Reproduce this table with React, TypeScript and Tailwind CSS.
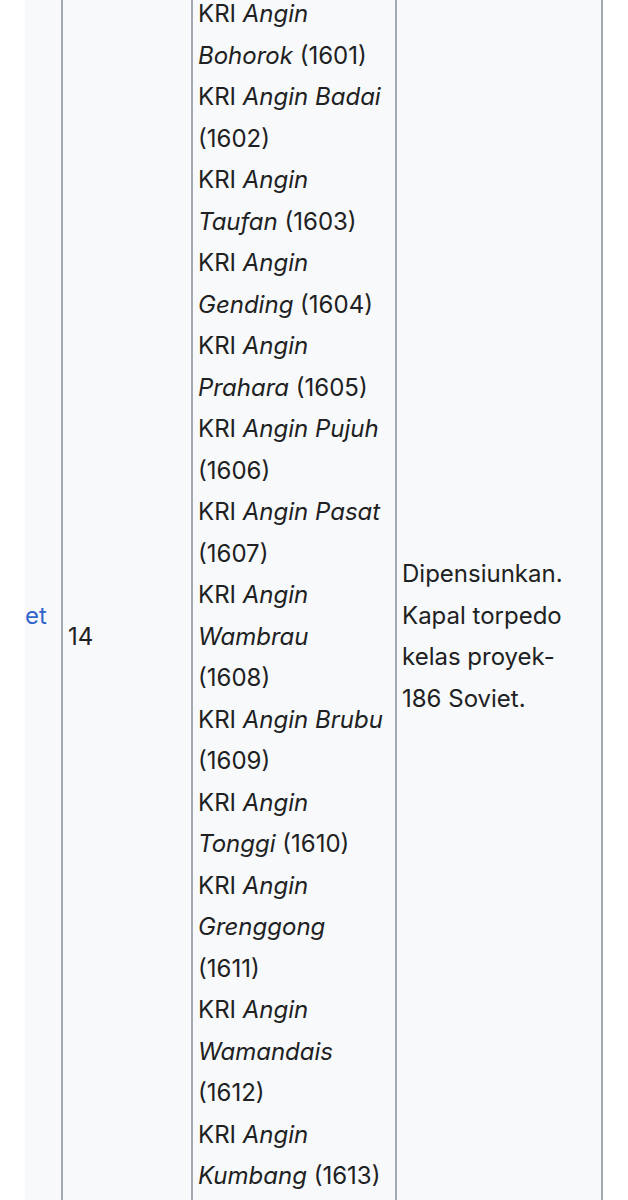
import React from "react";

type Part = { t: string; i?: boolean };

// each entry is one rendered line, forced to match the narrow column wrap
const SHIP_LINES: Part[][] = [
  [{ t: "KRI " }, { t: "Angin", i: true }],
  [{ t: "Bohorok", i: true }, { t: " (1601)" }],
  [{ t: "KRI " }, { t: "Angin Badai", i: true }],
  [{ t: "(1602)" }],
  [{ t: "KRI " }, { t: "Angin", i: true }],
  [{ t: "Taufan", i: true }, { t: " (1603)" }],
  [{ t: "KRI " }, { t: "Angin", i: true }],
  [{ t: "Gending", i: true }, { t: " (1604)" }],
  [{ t: "KRI " }, { t: "Angin", i: true }],
  [{ t: "Prahara", i: true }, { t: " (1605)" }],
  [{ t: "KRI " }, { t: "Angin Pujuh", i: true }],
  [{ t: "(1606)" }],
  [{ t: "KRI " }, { t: "Angin Pasat", i: true }],
  [{ t: "(1607)" }],
  [{ t: "KRI " }, { t: "Angin", i: true }],
  [{ t: "Wambrau", i: true }],
  [{ t: "(1608)" }],
  [{ t: "KRI " }, { t: "Angin Brubu", i: true }],
  [{ t: "(1609)" }],
  [{ t: "KRI " }, { t: "Angin", i: true }],
  [{ t: "Tonggi", i: true }, { t: " (1610)" }],
  [{ t: "KRI " }, { t: "Angin", i: true }],
  [{ t: "Grenggong", i: true }],
  [{ t: "(1611)" }],
  [{ t: "KRI " }, { t: "Angin", i: true }],
  [{ t: "Wamandais", i: true }],
  [{ t: "(1612)" }],
  [{ t: "KRI " }, { t: "Angin", i: true }],
  [{ t: "Kumbang", i: true }, { t: " (1613)" }],
];

const NOTE_LINES = ["Dipensiunkan.", "Kapal torpedo", "kelas proyek-", "186 Soviet."];

const Divider = () => <div className="w-[2px] shrink-0 bg-[#a2a9b1]" />;

export default function App() {
  return (
    <div
      className="h-[1200px] w-[628px] overflow-hidden bg-white text-[24px] leading-[41.5px] text-[#202122]"
      style={{ fontFamily: "Inter, 'Noto Sans', sans-serif" }}
    >
      <div className="-mt-[7px] flex">
        <div className="w-[25px] shrink-0 bg-white" />
        <div className="flex flex-1 bg-[#f8f9fa]">
          <div className="flex w-[36px] shrink-0 flex-col justify-center">
            <a className="whitespace-nowrap text-[#3366cc]">et</a>
            <span>&nbsp;</span>
          </div>
          <Divider />
          <div className="flex w-[128px] shrink-0 items-center pl-[5px]">14</div>
          <Divider />
          <div className="flex w-[202px] shrink-0 flex-col pb-[83px] pl-[5px] whitespace-nowrap">
            {SHIP_LINES.map((line, i) => (
              <div key={i}>
                {line.map((p, j) =>
                  p.i ? <i key={j}>{p.t}</i> : <span key={j}>{p.t}</span>
                )}
              </div>
            ))}
          </div>
          <Divider />
          <div className="flex w-[204px] shrink-0 flex-col justify-center pl-[5px] whitespace-nowrap">
            {NOTE_LINES.map((l) => (
              <div key={l}>{l}</div>
            ))}
          </div>
          <Divider />
        </div>
        <div className="w-[25px] shrink-0 bg-white" />
      </div>
    </div>
  );
}
